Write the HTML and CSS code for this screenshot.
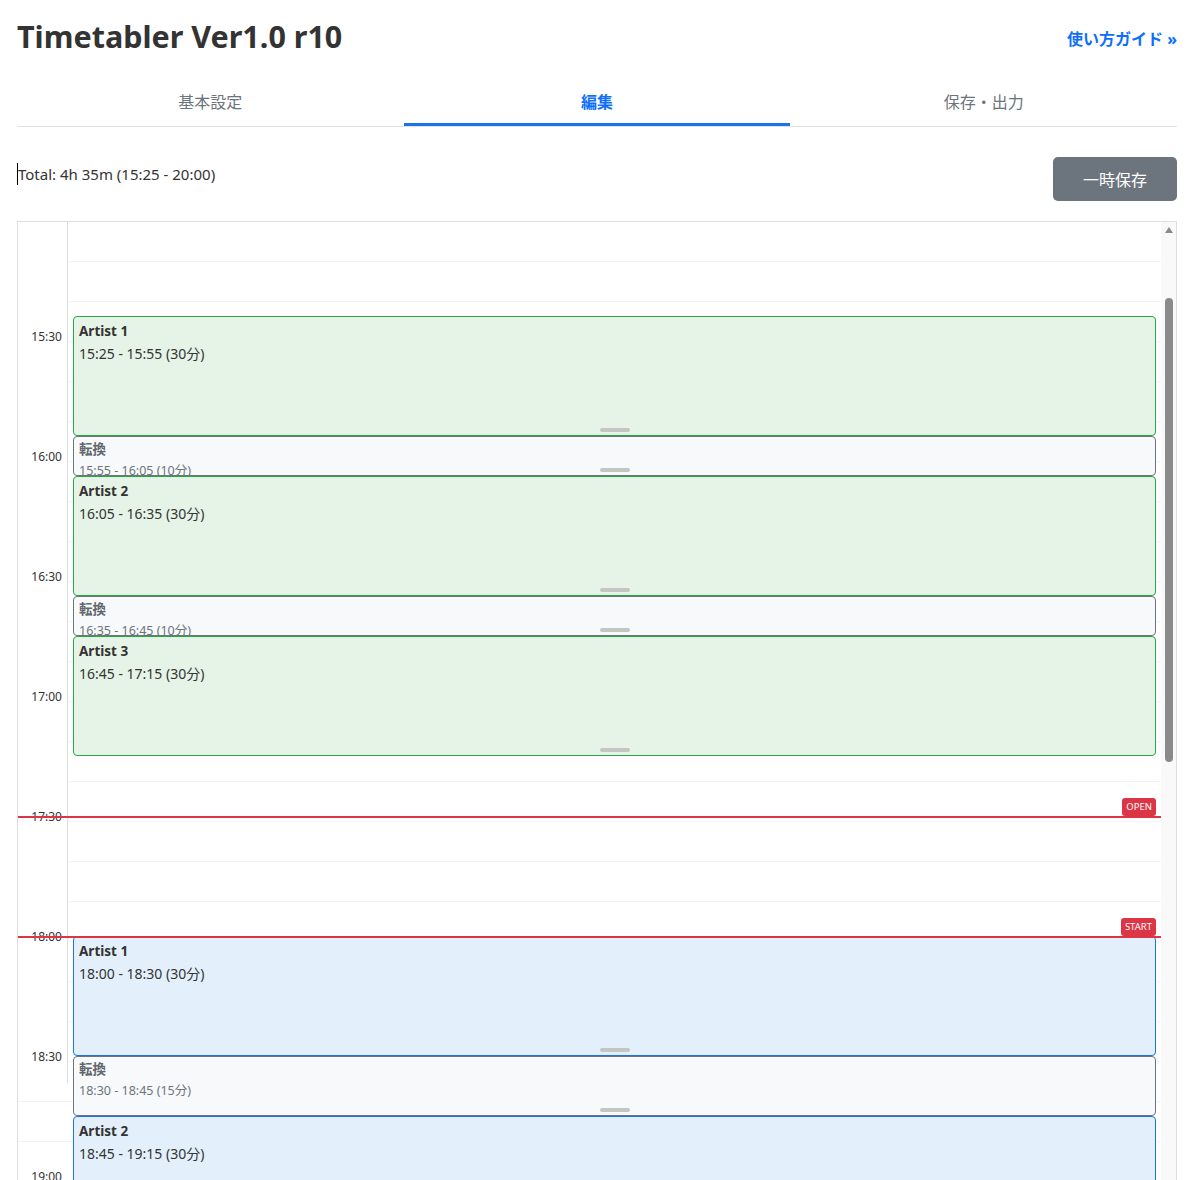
FILE: index.html
```html
<!DOCTYPE html>
<html lang="ja">
<head>
    <meta charset="utf-8">
    <title>Timetabler Ver1.0 r10</title>
    <link rel="stylesheet" href="styles.css">
</head>
<body>

    <div class="container">
        <header class="top">
            <h1>Timetabler Ver1.0 r10</h1>
            <a class="guide" href="#">使い方ガイド &raquo;</a>
        </header>

        <nav class="tabs">
            <a class="tab" href="#">基本設定</a>
            <a class="tab active" href="#">編集</a>
            <a class="tab" href="#">保存・出力</a>
        </nav>

        <div class="toolbar">
            <span class="total">Total: 4h 35m (15:25 - 20:00)</span>
            <button class="btn-save">一時保存</button>
        </div>

        <div class="timeline">
            <div class="tl-body">
                <!-- 10 minute grid rows -->
                <div class="grid">
                    <div class="row"></div><div class="row"></div><div class="row"></div><div class="row"></div>
                    <div class="row"></div><div class="row"></div><div class="row"></div><div class="row"></div>
                    <div class="row"></div><div class="row"></div><div class="row"></div><div class="row"></div>
                    <div class="row"></div><div class="row"></div><div class="row"></div><div class="row"></div>
                    <div class="row"></div><div class="row"></div><div class="row"></div><div class="row"></div>
                    <div class="row"></div><div class="row"></div><div class="row"></div><div class="row"></div>
                    <div class="row"></div>
                </div>

                <div class="time-col"></div>
                <div class="time-label" style="top: 106px">15:30</div>
                <div class="time-label" style="top: 226px">16:00</div>
                <div class="time-label" style="top: 346px">16:30</div>
                <div class="time-label" style="top: 466px">17:00</div>
                <div class="time-label" style="top: 586px">17:30</div>
                <div class="time-label" style="top: 706px">18:00</div>
                <div class="time-label" style="top: 826px">18:30</div>
                <div class="time-label" style="top: 946px">19:00</div>

                <!-- rehearsal -->
                <div class="slot green" style="top: 94px; height: 120px">
                    <div class="slot-name">Artist 1</div>
                    <div class="slot-time">15:25 - 15:55 (30分)</div>
                    <span class="handle"></span>
                </div>
                <div class="slot change" style="top: 214px; height: 40px">
                    <div class="slot-name">転換</div>
                    <div class="slot-time">15:55 - 16:05 (10分)</div>
                    <span class="handle"></span>
                </div>
                <div class="slot green" style="top: 254px; height: 120px">
                    <div class="slot-name">Artist 2</div>
                    <div class="slot-time">16:05 - 16:35 (30分)</div>
                    <span class="handle"></span>
                </div>
                <div class="slot change" style="top: 374px; height: 40px">
                    <div class="slot-name">転換</div>
                    <div class="slot-time">16:35 - 16:45 (10分)</div>
                    <span class="handle"></span>
                </div>
                <div class="slot green" style="top: 414px; height: 120px">
                    <div class="slot-name">Artist 3</div>
                    <div class="slot-time">16:45 - 17:15 (30分)</div>
                    <span class="handle"></span>
                </div>

                <!-- show -->
                <div class="slot blue" style="top: 714px; height: 120px">
                    <div class="slot-name">Artist 1</div>
                    <div class="slot-time">18:00 - 18:30 (30分)</div>
                    <span class="handle"></span>
                </div>
                <div class="slot change" style="top: 834px; height: 60px">
                    <div class="slot-name">転換</div>
                    <div class="slot-time">18:30 - 18:45 (15分)</div>
                    <span class="handle"></span>
                </div>
                <div class="slot blue" style="top: 894px; height: 120px">
                    <div class="slot-name">Artist 2</div>
                    <div class="slot-time">18:45 - 19:15 (30分)</div>
                    <span class="handle"></span>
                </div>

                <div class="marker" style="top: 594px"><span class="marker-tag">OPEN</span></div>
                <div class="marker" style="top: 714px"><span class="marker-tag">START</span></div>
            </div>

            <div class="scrollbar">
                <span class="scroll-up"></span>
                <span class="scroll-thumb"></span>
            </div>
        </div>
    </div>

</body>
</html>
```

FILE: styles.css
```css
html, body {
    overflow: hidden;
}

body {
    margin: 0;
    font-family: "Noto Sans", "Noto Sans CJK JP", sans-serif;
    color: #333;
    background-color: white;
}

.container {
    padding: 0 12px 0 17px;
}

.top {
    display: flex;
    justify-content: space-between;
    align-items: center;
    height: 72px;
}

h1 {
    margin: 0;
    font-size: 30.5px;
    font-weight: bold;
    color: #333;
}

.guide {
    margin-top: 4px;
    color: #0d6efd;
    font-size: 16px;
    font-weight: bold;
    text-decoration: none;
}

/* tabs */
.tabs {
    display: flex;
    border-bottom: 1px solid #dee2e6;
    margin-top: 8px;
}

.tab {
    flex: 1;
    text-align: center;
    height: 43px;
    line-height: 45px;
    font-size: 16px;
    color: #6c757d;
    text-decoration: none;
    border-bottom: 3px solid transparent;
}

.tab.active {
    color: #0d6efd;
    font-weight: bold;
    border-bottom-color: #1a73e8;
}

/* total + save */
.toolbar {
    display: flex;
    justify-content: space-between;
    align-items: flex-start;
    padding-top: 30px;
    height: 64px;
}

.total {
    margin-top: 6px;
    font-size: 15px;
    line-height: 22px;
    color: #333;
    border-left: 1px solid #000;
}

.btn-save {
    width: 124px;
    height: 44px;
    border: none;
    border-radius: 5px;
    background-color: #6c757d;
    color: white;
    font-family: inherit;
    font-size: 16px;
    cursor: pointer;
}

/* timeline */
.timeline {
    display: flex;
    height: 1000px;
    border: 1px solid #ddd;
    overflow: hidden;
}

.tl-body {
    position: relative;
    flex: 1;
}

.grid .row {
    height: 39px;
    border-bottom: 1px solid #f3f3f3;
}

.time-col {
    position: absolute;
    top: 0;
    left: 0;
    width: 49px;
    height: 861px;
    background-color: white;
    border-right: 1px solid #ddd;
}

.time-label {
    position: absolute;
    left: 0;
    width: 44px;
    margin-top: 1px;
    text-align: right;
    font-size: 12px;
    line-height: 16px;
    color: #333;
}

.slot {
    position: absolute;
    left: 55px;
    right: 5px;
    box-sizing: border-box;
    padding: 5px 5px;
    border: 1px solid;
    border-radius: 4px;
    overflow: hidden;
}

.slot.green {
    background-color: #e6f4e7;
    border-color: #28a745;
}

.slot.blue {
    background-color: #e3f0fc;
    border-color: #1a73e8;
}

.slot.change {
    padding-top: 3px;
    background-color: #f8f9fa;
    border-color: #6c757d;
    color: #6c757d;
}

.slot-name {
    font-size: 13.5px;
    font-weight: bold;
    line-height: 18px;
}

.slot-time {
    margin-top: 5px;
    font-size: 14px;
    line-height: 18px;
}

.slot.change .slot-name {
    color: #5f666d;
}

.slot.change .slot-time {
    margin-top: 4px;
    font-size: 12.5px;
}

.handle {
    position: absolute;
    left: 50%;
    bottom: 3px;
    width: 30px;
    height: 4px;
    margin-left: -15px;
    border-radius: 2px;
    background-color: #c3c6c3;
}

.marker {
    position: absolute;
    left: 0;
    right: 0;
    height: 2px;
    background-color: #dc3545;
}

.marker-tag {
    position: absolute;
    right: 5px;
    bottom: 2px;
    padding: 0 4px;
    height: 18px;
    line-height: 18px;
    border-radius: 3px;
    background-color: #dc3545;
    color: white;
    font-size: 9.5px;
}

/* scrollbar look */
.scrollbar {
    width: 15px;
    background-color: #f9f9f9;
    position: relative;
}

.scroll-up {
    display: block;
    width: 0;
    height: 0;
    margin: 5px auto 0;
    border-left: 4px solid transparent;
    border-right: 4px solid transparent;
    border-bottom: 6px solid #8a8a8a;
}

.scroll-thumb {
    display: block;
    width: 8px;
    height: 464px;
    margin: 65px auto 0;
    border-radius: 4px;
    background-color: #8a8a8a;
}
```
